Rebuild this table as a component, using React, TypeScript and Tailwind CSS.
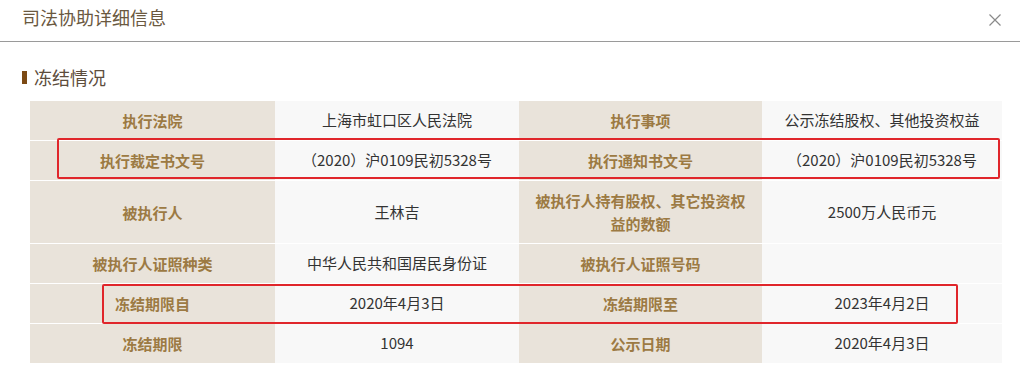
import React from "react";

type Row = { l1: string; v1: string; l2: string; v2: string; tall?: boolean };

const rows: Row[] = [
  { l1: "执行法院", v1: "上海市虹口区人民法院", l2: "执行事项", v2: "公示冻结股权、其他投资权益" },
  { l1: "执行裁定书文号", v1: "（2020）沪0109民初5328号", l2: "执行通知书文号", v2: "（2020）沪0109民初5328号" },
  { l1: "被执行人", v1: "王林吉", l2: "被执行人持有股权、其它投资权益的数额", v2: "2500万人民币元", tall: true },
  { l1: "被执行人证照种类", v1: "中华人民共和国居民身份证", l2: "被执行人证照号码", v2: "" },
  { l1: "冻结期限自", v1: "2020年4月3日", l2: "冻结期限至", v2: "2023年4月2日" },
  { l1: "冻结期限", v1: "1094", l2: "公示日期", v2: "2020年4月3日" },
];

const Label: React.FC<{ text: string }> = ({ text }) => (
  <div className="flex items-center justify-center bg-[#e9e3da] px-[16px] text-center font-bold leading-[23px] text-[#9c7a43]">
    {text}
  </div>
);

const Value: React.FC<{ text: string }> = ({ text }) => (
  <div className="flex items-center justify-center bg-[#f8f8f8] px-[12px] text-center text-[#333]">
    {text}
  </div>
);

const App: React.FC = () => {
  return (
    <div className="h-[389px] w-[1020px] overflow-hidden bg-white font-['Noto_Sans_CJK_SC','Microsoft_YaHei',sans-serif]">
      <div className="flex h-[42px] items-center justify-between border-b border-[#9a9a9a] pl-[22px] pr-[18px]">
        <h2 className="pb-[6px] text-[18px] text-[#6a5840]">司法协助详细信息</h2>
        <svg width="14" height="14" viewBox="0 0 14 14" className="mb-[2px]">
          <path d="M1.5 1.5 L12.5 12.5 M12.5 1.5 L1.5 12.5" stroke="#8a8a8a" strokeWidth="1.2" />
        </svg>
      </div>

      <div className="mt-[23px] flex items-center pl-[22px]">
        <span className="h-[13px] w-[5px] bg-[#7c4a14]" />
        <span className="ml-[7px] text-[18px] leading-[24px] text-[#5d4d3c]">冻结情况</span>
      </div>

      <div className="relative ml-[30px] mt-[12px] w-[972px] text-[15px]">
        <div className="flex flex-col gap-px">
          {rows.map((r, i) => (
            <div
              key={i}
              className={`grid grid-cols-[245px_244px_243px_240px] ${r.tall ? "h-[62px]" : "h-[39px]"}`}
            >
              <Label text={r.l1} />
              <Value text={r.v1} />
              <Label text={r.l2} />
              <Value text={r.v2} />
            </div>
          ))}
        </div>

        {/* highlight boxes */}
        <div className="pointer-events-none absolute left-[27px] top-[37px] h-[41px] w-[943px] rounded-[2px] border-2 border-[#e0262b]" />
        <div className="pointer-events-none absolute left-[72px] top-[183px] h-[40px] w-[856px] rounded-[2px] border-2 border-[#e0262b]" />
      </div>
    </div>
  );
};

export default App;
